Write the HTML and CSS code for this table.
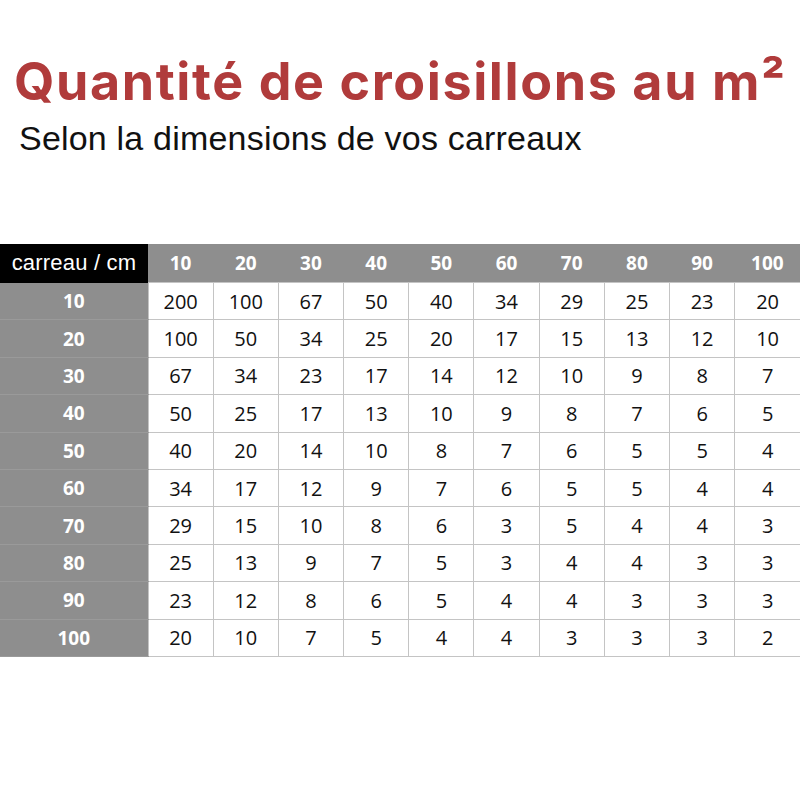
FILE: index.html
```html
<!DOCTYPE html>
<html lang="fr">
<head>
<meta charset="utf-8">
<link rel="stylesheet" href="styles.css">
</head>
<body>
<div class="page">
  <h1 class="title">Quantité de croisillons au m²</h1>
  <p class="subtitle">Selon la dimensions de vos carreaux</p>
  <table class="grid">
    <thead>
      <tr><th class="corner">carreau / cm</th><th>10</th><th>20</th><th>30</th><th>40</th><th>50</th><th>60</th><th>70</th><th>80</th><th>90</th><th>100</th></tr>
    </thead>
    <tbody>
      <tr><th>10</th><td>200</td><td>100</td><td>67</td><td>50</td><td>40</td><td>34</td><td>29</td><td>25</td><td>23</td><td>20</td></tr>
      <tr><th>20</th><td>100</td><td>50</td><td>34</td><td>25</td><td>20</td><td>17</td><td>15</td><td>13</td><td>12</td><td>10</td></tr>
      <tr><th>30</th><td>67</td><td>34</td><td>23</td><td>17</td><td>14</td><td>12</td><td>10</td><td>9</td><td>8</td><td>7</td></tr>
      <tr><th>40</th><td>50</td><td>25</td><td>17</td><td>13</td><td>10</td><td>9</td><td>8</td><td>7</td><td>6</td><td>5</td></tr>
      <tr><th>50</th><td>40</td><td>20</td><td>14</td><td>10</td><td>8</td><td>7</td><td>6</td><td>5</td><td>5</td><td>4</td></tr>
      <tr><th>60</th><td>34</td><td>17</td><td>12</td><td>9</td><td>7</td><td>6</td><td>5</td><td>5</td><td>4</td><td>4</td></tr>
      <tr><th>70</th><td>29</td><td>15</td><td>10</td><td>8</td><td>6</td><td>3</td><td>5</td><td>4</td><td>4</td><td>3</td></tr>
      <tr><th>80</th><td>25</td><td>13</td><td>9</td><td>7</td><td>5</td><td>3</td><td>4</td><td>4</td><td>3</td><td>3</td></tr>
      <tr><th>90</th><td>23</td><td>12</td><td>8</td><td>6</td><td>5</td><td>4</td><td>4</td><td>3</td><td>3</td><td>3</td></tr>
      <tr><th>100</th><td>20</td><td>10</td><td>7</td><td>5</td><td>4</td><td>4</td><td>3</td><td>3</td><td>3</td><td>2</td></tr>
    </tbody>
  </table>
</div>
</body>
</html>
```

FILE: styles.css
```css
html, body {
  margin: 0;
  padding: 0;
  background: #ffffff;
}

.page {
  width: 800px;
  height: 800px;
  padding-top: 51px;
  box-sizing: border-box;
}

.title {
  margin: 0 0 0 14px;
  font-family: "Inter", "Open Sans", sans-serif;
  font-weight: 700;
  font-size: 52px;
  line-height: 62px;
  letter-spacing: 1.6px;
  color: #b03b3b;
  white-space: nowrap;
}

.subtitle {
  margin: 5px 0 0 19px;
  font-family: "Liberation Sans", "Noto Sans", sans-serif;
  font-weight: 400;
  font-size: 34px;
  line-height: 40px;
  letter-spacing: 0.2px;
  color: #111111;
  white-space: nowrap;
}

.grid {
  margin-top: 86px;
  width: 800px;
  border-collapse: collapse;
  table-layout: fixed;
  font-family: "Open Sans", "Noto Sans", sans-serif;
}

.grid th,
.grid td {
  height: 36.4px;
  padding: 0;
  text-align: center;
  vertical-align: middle;
}

.grid thead th {
  background: #8e8e8e;
  color: #ffffff;
  font-weight: 700;
  font-size: 19px;
  width: 65.2px;
  height: 38px;
}

.grid thead th.corner {
  width: 148px;
  background: #000000;
  font-family: "Liberation Sans", sans-serif;
  font-weight: 400;
  font-size: 22px;
  letter-spacing: 0.2px;
}

.grid tbody th {
  background: #8e8e8e;
  color: #ffffff;
  font-weight: 700;
  font-size: 19px;
  border-bottom: 1px solid #9a9a9a;
}

.grid td {
  background: #ffffff;
  color: #111111;
  font-size: 20px;
  border: 1px solid #c4c4c4;
}

.grid tr td:last-child {
  border-right: none;
}
```
